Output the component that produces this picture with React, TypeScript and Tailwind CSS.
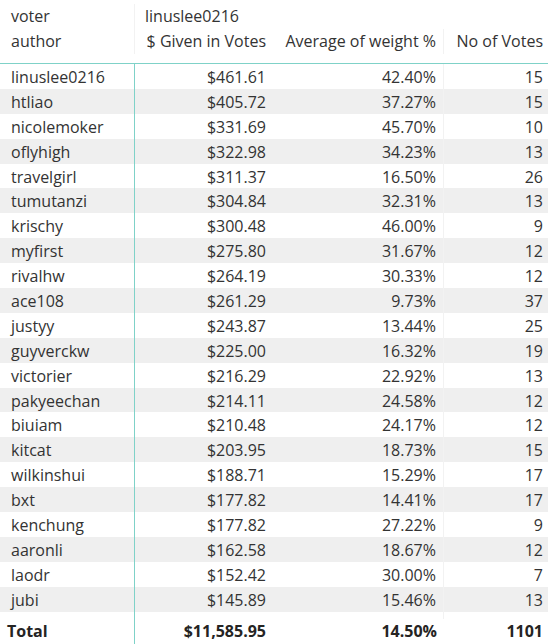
import React from "react";

const rows: [string, string, string, string][] = [
  ["linuslee0216", "$461.61", "42.40%", "15"],
  ["htliao", "$405.72", "37.27%", "15"],
  ["nicolemoker", "$331.69", "45.70%", "10"],
  ["oflyhigh", "$322.98", "34.23%", "13"],
  ["travelgirl", "$311.37", "16.50%", "26"],
  ["tumutanzi", "$304.84", "32.31%", "13"],
  ["krischy", "$300.48", "46.00%", "9"],
  ["myfirst", "$275.80", "31.67%", "12"],
  ["rivalhw", "$264.19", "30.33%", "12"],
  ["ace108", "$261.29", "9.73%", "37"],
  ["justyy", "$243.87", "13.44%", "25"],
  ["guyverckw", "$225.00", "16.32%", "19"],
  ["victorier", "$216.29", "22.92%", "13"],
  ["pakyeechan", "$214.11", "24.58%", "12"],
  ["biuiam", "$210.48", "24.17%", "12"],
  ["kitcat", "$203.95", "18.73%", "15"],
  ["wilkinshui", "$188.71", "15.29%", "17"],
  ["bxt", "$177.82", "14.41%", "17"],
  ["kenchung", "$177.82", "27.22%", "9"],
  ["aaronli", "$162.58", "18.67%", "12"],
  ["laodr", "$152.42", "30.00%", "7"],
  ["jubi", "$145.89", "15.46%", "13"],
  ["lightsplasher", "$141.20", "21.05%", "11"],
];

export default function App() {
  return (
    <div
      className="w-[548px] h-[644px] bg-white overflow-hidden text-[16px] text-[#333333]"
      style={{ fontFamily: '"Segoe UI", "Open Sans", "Noto Sans", sans-serif' }}
    >
      {/* header */}
      <div className="h-[64px] grid grid-cols-[135px_139px_170px_104px] grid-rows-[25px_25px] content-start pt-[4px] border-b border-[#7fd2c8]">
        <div className="pl-[11px] leading-[25px] border-r border-[#f2f2f2]">voter</div>
        <div className="pl-[10px] leading-[25px] col-span-3">linuslee0216</div>
        <div className="pl-[11px] leading-[25px] border-r border-[#f2f2f2]">author</div>
        <div className="pr-[8px] text-right leading-[25px]">$ Given in Votes</div>
        <div className="pr-[7px] text-right leading-[25px] border-r border-[#f2f2f2]">Average of weight %</div>
        <div className="pr-[5px] text-right leading-[25px]">No of Votes</div>
      </div>
      {/* body */}
      <div className="h-[555px] overflow-hidden">
        {rows.map((r, i) => (
          <div
            key={i}
            className={`grid grid-cols-[135px_139px_170px_104px] h-[24.9px] pt-[2px] leading-[22.9px] ${
              i % 2 === 1 ? "bg-[#efefef]" : "bg-white"
            }`}
          >
            <div className="pl-[11px] border-r border-[#7fd2c8] -mt-[2px] pt-[2px] whitespace-nowrap overflow-hidden">{r[0]}</div>
            <div className="pr-[8px] text-right">{r[1]}</div>
            <div className="pr-[7px] text-right border-r border-[#f2f2f2] -mt-[2px] pt-[2px]">{r[2]}</div>
            <div className="pr-[5px] text-right">{r[3]}</div>
          </div>
        ))}
      </div>
      {/* total */}
      <div className="grid grid-cols-[135px_139px_170px_104px] h-[25px] leading-[25px] font-bold text-[#252423] bg-white">
        <div className="pl-[7px] border-r border-[#7fd2c8]">Total</div>
        <div className="pr-[8px] text-right">$11,585.95</div>
        <div className="pr-[7px] text-right">14.50%</div>
        <div className="pr-[5px] text-right">1101</div>
      </div>
    </div>
  );
}
